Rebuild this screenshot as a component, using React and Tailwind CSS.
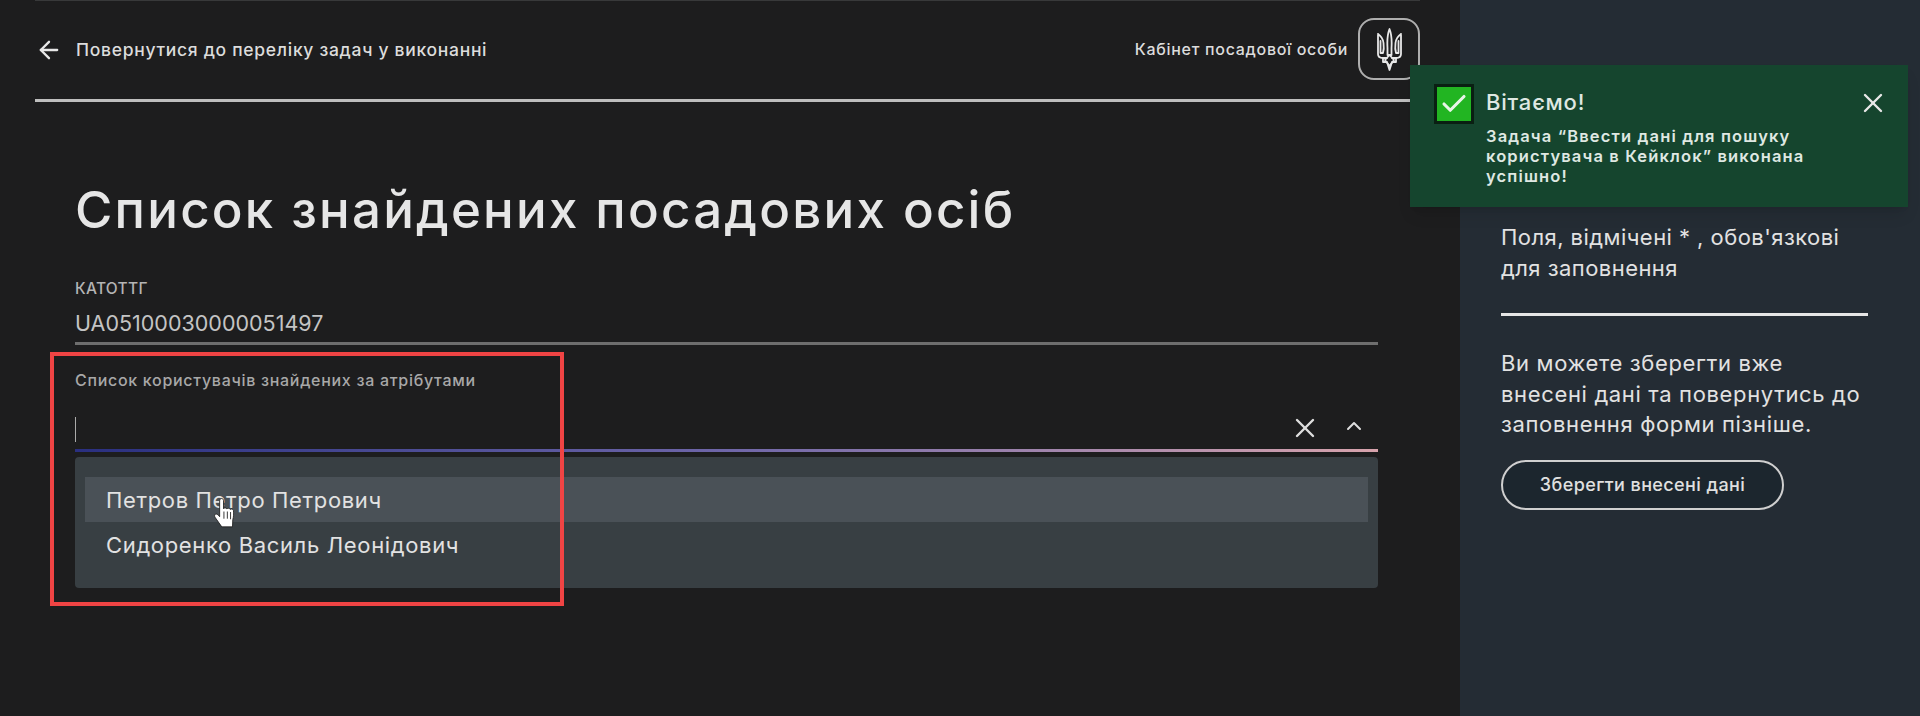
import React from "react";
import { ArrowLeft, X, ChevronUp, Check } from "lucide-react";

function Trident() {
  return (
    <svg width="27" height="43" viewBox="0 0 27 43" fill="none" stroke="#e8e8e8" strokeWidth="1.8" strokeLinejoin="round" strokeLinecap="round">
      <path d="M13.5 1 C11.5 6 11 12 11.5 20 L11.5 27 L15.5 27 L15.5 20 C16 12 15.5 6 13.5 1Z" />
      <path d="M2 6 L2 26 C2 29 4 30 7 30 L11 30 M2 6 C5 8 7 11 7.5 15 C8 19 8 22 7 25 L4.5 25 L4.5 13" />
      <path d="M25 6 L25 26 C25 29 23 30 20 30 L16 30 M25 6 C22 8 20 11 19.5 15 C19 19 19 22 20 25 L22.5 25 L22.5 13" />
      <path d="M7 30 L7 34 L11 34 L13.5 42 L16 34 L20 34 L20 30" />
      <path d="M9 32 L13.5 27 L18 32 L13.5 38 Z" />
    </svg>
  );
}

function Hand({ className }) {
  return (
    <svg className={className} viewBox="0 0 24 29" fill="none">
      <path d="M7 2.5c0-1.2.8-2 1.8-2s1.8.8 1.8 2V10c.3-1 2.8-1 3.2.3.5-1 2.7-.9 3.1.4.6-.8 2.8-.6 3 1 .3 3 .2 6-.6 8.5L19 27H9L3 18.5c-1-1.3-1-2.7 0-3.3 1-.6 2.2 0 4 2.3Z" fill="#ffffff" stroke="#1d1d1d" strokeWidth="0.8" />
      <path d="M11 13v6M14.2 13v6M17.2 13.5v6" stroke="#333" strokeWidth="0.9" strokeLinecap="round" />
    </svg>
  );
}

export default function App() {
  const font = "font-['Inter','Liberation_Sans',sans-serif]";
  return (
    <div className={`relative flex h-[716px] w-[1920px] overflow-hidden bg-[#1d1d1e] ${font}`}>
      <main className="flex w-[1460px] flex-col bg-[#1d1d1e] pl-[35px] pr-[40px]">
        <header className="flex h-[102px] items-start justify-between border-t border-b-[3px] border-t-[#38393a] border-b-[#bebebe] pt-[17px]">
          <div className="mt-[18px] flex items-center">
            <ArrowLeft className="h-[28px] w-[28px] text-[#e8e8e8]" strokeWidth={2} />
            <span className="ml-[13px] text-[17.5px] font-medium leading-[24px] tracking-[0.7px] text-[#dcdcdc]">Повернутися до переліку задач у виконанні</span>
          </div>
          <div className="flex items-center">
            <span className="mr-[10px] text-[16px] font-medium tracking-[0.7px] text-[#dcdcdc]">Кабінет посадової особи</span>
            <div className="flex h-[62px] w-[62px] items-center justify-center rounded-[16px] border-2 border-[#aeaeae]">
              <Trident />
            </div>
          </div>
        </header>
        <div className="pl-[40px] pr-[42px]">
          <h1 className="mt-[77px] text-[51px] font-medium leading-[62px] tracking-[2.22px] text-[#e6e6e6]">Список знайдених посадових осіб</h1>
          <div className="mt-[39px] text-[15.5px] font-medium leading-[18px] tracking-[0.3px] text-[#b4b4b4]">КАТОТТГ</div>
          <div className="mt-[11px] border-b-[3px] border-[#6e6e6e] pb-[5px] text-[21.5px] leading-[28px] text-[#c4c4c4]">UA05100030000051497</div>
          <div className="mt-[25px] text-[16px] font-medium leading-[20px] tracking-[0.7px] text-[#a8a8a8]">Список користувачів знайдених за атрібутами</div>
          <div className="mt-[27px] flex h-[32px] items-start justify-between">
            <div className="h-[25px] w-[1px] bg-[#aaaaaa]" />
            <div className="mr-[12px] -mt-[5px] flex items-center gap-[21px]">
              <X className="h-[32px] w-[32px] text-[#dedede]" strokeWidth={1.8} />
              <ChevronUp className="mb-[4px] h-[24px] w-[24px] text-[#dedede]" strokeWidth={2} />
            </div>
          </div>
          <div className="h-[3px] bg-gradient-to-r from-[#2a2f80] via-[#6f66a8] to-[#d7a3ac]" />
          <div className="mt-[5px] h-[131px] rounded-[4px] bg-[#383f43] pl-[10px] pr-[10px] pt-[20px]">
            <div className="flex h-[45px] items-center bg-[#4a5157] pl-[21px] pt-[2px] text-[22px] tracking-[0.65px] text-[#e2e2e2]">Петров Петро Петрович</div>
            <div className="flex h-[45px] items-center pl-[21px] pt-[2px] text-[22px] tracking-[0.65px] text-[#e2e2e2]">Сидоренко Василь Леонідович</div>
          </div>
        </div>
      </main>
      <aside className="w-[460px] bg-[#242c34] pl-[41px] pr-[52px] pt-[222px]">
        <p className="text-[22px] leading-[31px] tracking-[0.45px] text-[#e2e2e2]">Поля, відмічені * , обов'язкові для заповнення</p>
        <div className="mt-[29px] h-[3px] bg-[#e6e6e6]" />
        <p className="mt-[32px] text-[22px] leading-[30.5px] tracking-[0.65px] text-[#e2e2e2]">Ви можете зберегти вже внесені дані та повернутись до заповнення форми пізніше.</p>
        <button className="mt-[20px] flex h-[50px] w-[283px] items-center justify-center rounded-full border-2 border-[#cfcfcf] bg-[#1c262e] text-[18px] font-medium tracking-[0.4px] text-[#e0e0e0]">Зберегти внесені дані</button>
      </aside>

      <div className="absolute left-[50px] top-[352px] h-[254px] w-[514px] border-4 border-[#f04444]" />

      <Hand className="absolute left-[212px] top-[498px] h-[31px] w-[26px]" />

      <div className="absolute left-[1410px] top-[65px] flex h-[142px] w-[498px] bg-[#15452e] pl-[24px] pr-[19px] pt-[19px] shadow-lg">
        <div className="flex h-[40px] w-[40px] shrink-0 items-center justify-center border-[3px] border-[#0a1f12] bg-[#22b522]">
          <Check className="h-[30px] w-[30px] text-[#e8f5e8]" strokeWidth={2.5} />
        </div>
        <div className="ml-[12px] w-[325px]">
          <div className="text-[22px] font-medium leading-[36px] tracking-[0.8px] text-[#dfe8e2]">Вітаємо!</div>
          <p className="mt-[6px] text-[16.5px] font-semibold leading-[20px] tracking-[1.15px] text-[#dfe8e2]">Задача “Ввести дані для пошуку користувача в Кейклок” виконана успішно!</p>
        </div>
        <X className="ml-auto mt-[3px] h-[32px] w-[32px] text-[#e8e8e8]" strokeWidth={1.8} />
      </div>
    </div>
  );
}
